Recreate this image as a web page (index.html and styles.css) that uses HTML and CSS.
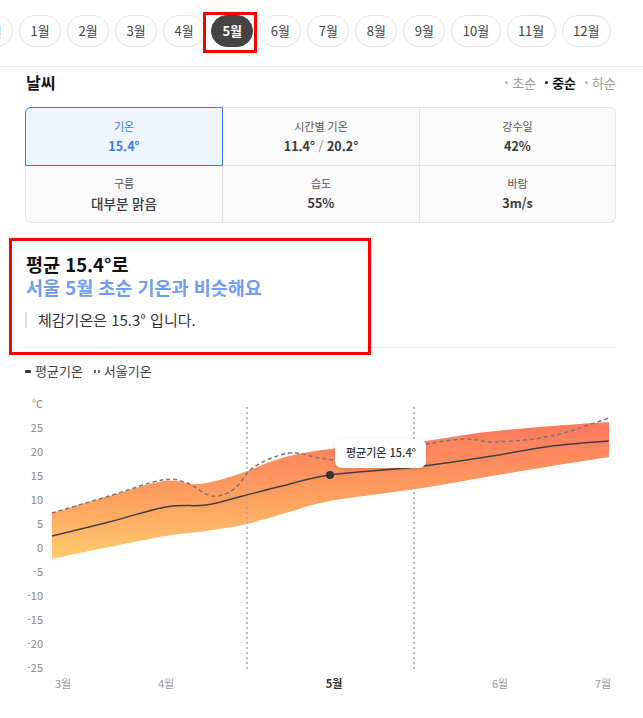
FILE: index.html
```html
<!DOCTYPE html>
<html lang="ko">
<head>
<meta charset="utf-8">
<title>날씨</title>
<link rel="stylesheet" href="styles.css">
</head>
<body>
<nav class="months">
  <div class="month-row">
    <span class="pill pill-edge">12월</span>
    <span class="pill">1월</span>
    <span class="pill">2월</span>
    <span class="pill">3월</span>
    <span class="pill">4월</span>
    <span class="pill pill-on">5월<span class="mark mark-pill"></span></span>
    <span class="pill">6월</span>
    <span class="pill">7월</span>
    <span class="pill">8월</span>
    <span class="pill">9월</span>
    <span class="pill">10월</span>
    <span class="pill">11월</span>
    <span class="pill">12월</span>
  </div>
</nav>
<main class="content">
  <div class="head">
    <h2 class="title">날씨</h2>
    <ul class="terms">
      <li class="term">초순</li>
      <li class="term term-on">중순</li>
      <li class="term">하순</li>
    </ul>
  </div>
  <div class="stats">
    <div class="cell cell-on"><span class="label">기온</span><span class="value">15.4°</span></div>
    <div class="cell"><span class="label">시간별 기온</span><span class="value">11.4° <span class="slash">/</span> 20.2°</span></div>
    <div class="cell"><span class="label">강수일</span><span class="value">42%</span></div>
    <div class="cell"><span class="label">구름</span><span class="value value-text">대부분 맑음</span></div>
    <div class="cell"><span class="label">습도</span><span class="value">55%</span></div>
    <div class="cell"><span class="label">바람</span><span class="value">3m/s</span></div>
  </div>
  <section class="summary">
    <span class="mark mark-summary"></span>
    <p class="headline">평균 15.4°로</p>
    <p class="headline headline-sub">서울 5월 초순 기온과 비슷해요</p>
    <p class="quote">체감기온은 15.3° 입니다.</p>
  </section>
  <div class="legend">
    <span class="key key-avg"></span><span class="key-text">평균기온</span>
    <span class="key key-seoul"><i></i><i></i></span><span class="key-text">서울기온</span>
  </div>
  <svg class="chart" width="591" height="305" viewBox="26 395 591 305">
    <defs>
      <linearGradient id="band" x1="0" y1="0" x2="0" y2="1">
        <stop offset="0" stop-color="#ff785e"/>
        <stop offset="0.55" stop-color="#fe9f5f"/>
        <stop offset="1" stop-color="#ffcb6e"/>
      </linearGradient>
      <filter id="shadow" x="-20%" y="-40%" width="140%" height="180%">
        <feDropShadow dx="0" dy="1" stdDeviation="2" flood-color="#000" flood-opacity="0.14"/>
      </filter>
    </defs>
    <g class="axis-y">
      <text x="44" y="409">°C</text>
      <text x="44" y="433">25</text>
      <text x="44" y="457">20</text>
      <text x="44" y="481">15</text>
      <text x="44" y="505">10</text>
      <text x="44" y="529">5</text>
      <text x="44" y="553">0</text>
      <text x="44" y="577">-5</text>
      <text x="44" y="601">-10</text>
      <text x="44" y="625">-15</text>
      <text x="44" y="649">-20</text>
      <text x="44" y="673">-25</text>
    </g>
    <path class="band" d="M53,514 C62.5,511.2 91.3,502.3 110,497 S150,484 165,482 S187.5,486.2 200,485 S226.2,479.3 240,475 S267.8,463.2 283,459 S308.7,452.7 331,450 S391,445.8 417,443 S464.3,435.7 487,433 S532.5,428.7 553,427 S600.5,423.7 610,423 L610,458 C600.5,459.5 573.5,463.7 553,467 S509.7,474.2 487,478 S443,486 417,490 S352.2,498.2 331,502 S303.8,509.2 290,513 S261.8,521.8 248,525 S220.5,530 207,532 S183.2,534.3 167,537 S129,544.2 110,548 S62.5,558 53,560 Z"/>
    <line class="guide" x1="248" y1="408" x2="248" y2="671"/>
    <line class="guide" x1="415" y1="408" x2="415" y2="671"/>
    <path class="seoul" d="M53,514 C62.5,511.2 91.7,502.5 110,497 S150,483.2 163,481 S179.7,481.3 188,484 S205.2,496 213,497 S228,494.8 235,490 S245.8,474 255,468 S279.2,455.5 290,454 S310.8,457.8 320,459 S334.2,461.8 345,461 S371.3,456.7 385,454 S413.3,447.3 427,445 S455.3,440.3 467,440 S482.7,443.5 497,443 S534.2,441 553,437 S600.5,422 610,419"/>
    <path class="avg" d="M53,537 C62.5,534.7 91,527.8 110,523 S150.8,510.8 167,508 S194.8,507.7 207,506 S227.3,501.2 240,498 S267.8,490.7 283,487 S308.7,479.2 331,476 S391,471 417,468 S464.3,461.5 487,458 S532.5,449.7 553,447 S600.5,442.8 610,442"/>
    <circle class="dot" cx="331" cy="476" r="4"/>
    <g class="tip">
      <rect x="336" y="440" width="91" height="29" rx="7" filter="url(#shadow)"/>
      <text x="347" y="458">평균기온 15.4°</text>
    </g>
    <g class="axis-x">
      <text x="64" y="689">3월</text>
      <text x="167" y="689">4월</text>
      <text class="axis-on" x="335" y="689">5월</text>
      <text x="501" y="689">6월</text>
      <text x="604" y="689">7월</text>
    </g>
  </svg>
</main>
</body>
</html>
```

FILE: styles.css
```css
* { box-sizing: border-box; }
html, body { margin: 0; padding: 0; background: #fff; }
body {
  font-family: "Noto Sans CJK KR", "Noto Sans", sans-serif;
  color: #333;
  width: 643px;
  overflow: hidden;
}
p, h2, ul { margin: 0; padding: 0; }
ul { list-style: none; }

.months {
  padding: 15px 0 19px;
  border-bottom: 1px solid #ececec;
  overflow: hidden;
}
.month-row {
  display: flex;
  gap: 6px;
  white-space: nowrap;
}
.pill {
  position: relative;
  flex: none;
  height: 32px;
  padding: 0 10.4px;
  border: 1px solid #e2e2e2;
  border-radius: 16px;
  font-size: 13px;
  line-height: 30px;
  color: #444;
  text-align: center;
}
.pill-edge { margin-left: -36px; }
.pill-on {
  background: #444;
  border-color: #444;
  color: #fff;
  font-weight: 700;
}
.mark {
  position: absolute;
  border: 3px solid #ff0000;
  pointer-events: none;
}
.mark-pill {
  left: -9px;
  top: -4px;
  width: 54px;
  height: 41px;
}

.content { padding: 0 27px 0 25px; }

.head {
  display: flex;
  align-items: center;
  justify-content: space-between;
  height: 26px;
  padding-top: 5px;
  margin-bottom: 14px;
}
.title {
  font-size: 16px;
  line-height: 21px;
  font-weight: 700;
  color: #111;
  padding-left: 1px;
}
.terms { display: flex; gap: 9px; }
.term {
  display: flex;
  align-items: center;
  gap: 4px;
  font-size: 13px;
  line-height: 18px;
  color: #9a9a9a;
}
.term::before {
  content: "";
  width: 3px;
  height: 3px;
  border-radius: 50%;
  background: #b0b0b0;
}
.term-on { color: #111; font-weight: 700; }
.term-on::before { background: #111; }

.stats {
  display: grid;
  grid-template-columns: 198px 197px 196px;
}
.cell {
  display: flex;
  flex-direction: column;
  align-items: center;
  justify-content: center;
  gap: 2px;
  height: 57px;
  background: #fafafa;
  border-right: 1px solid #e4e4e4;
  border-bottom: 1px solid #e4e4e4;
}
.cell:nth-child(-n+3) { height: 59px; border-top: 1px solid #e4e4e4; }
.cell:nth-child(3n+1) { border-left: 1px solid #e4e4e4; }
.cell:nth-child(1) { border-top-left-radius: 6px; }
.cell:nth-child(3) { border-top-right-radius: 6px; }
.cell:nth-child(4) { border-bottom-left-radius: 6px; }
.cell:nth-child(6) { border-bottom-right-radius: 6px; }
.cell-on {
  background: #eef5ff;
  border-color: #3b7df5;
}
.cell:nth-child(-n+3).cell-on { border-color: #3b7df5; }
.label {
  font-size: 11px;
  line-height: 16px;
  color: #555;
}
.value {
  font-size: 12.5px;
  line-height: 20px;
  font-weight: 700;
  color: #3a3a3a;
}
.slash { font-weight: 400; color: #888; }
.value-text { font-size: 13.5px; font-weight: 500; }
.cell-on .label, .cell-on .value { color: #3b7af2; }

.summary {
  position: relative;
  margin-top: 30px;
  padding-bottom: 19px;
  border-bottom: 1px solid #ececec;
}
.mark-summary {
  left: -16px;
  top: -15px;
  width: 362px;
  height: 117px;
}
.headline {
  font-size: 18.5px;
  line-height: 23px;
  font-weight: 700;
  color: #111;
  padding-left: 1px;
}
.headline-sub { color: #6f9cf4; }
.quote {
  margin-top: 13px;
  padding-left: 11px;
  border-left: 2px solid #dedede;
  font-size: 15px;
  line-height: 16px;
  color: #333;
}

.legend {
  display: flex;
  align-items: center;
  margin-top: 14px;
  height: 18px;
  font-size: 13px;
  line-height: 18px;
  color: #444;
}
.key { flex: none; display: flex; gap: 1px; }
.key-avg { width: 6px; height: 3px; background: #333; border-radius: 1px; margin-right: 4px; }
.key-seoul { margin-left: 11px; margin-right: 4px; }
.key-seoul i { display: block; width: 2px; height: 3px; background: #666; }
.key-seoul i + i { margin-left: 1px; }

.chart { display: block; margin-top: 14px; overflow: hidden; }
.chart text { font-family: "Noto Sans CJK KR", "Noto Sans", sans-serif; }
.axis-y text { font-size: 11px; fill: #888; text-anchor: end; }
.axis-x text { font-size: 11px; fill: #999; text-anchor: middle; }
.axis-x .axis-on { fill: #333; font-weight: 700; }
.band { fill: url(#band); }
.guide { stroke: #a8a8a8; stroke-width: 1.5; stroke-dasharray: 2 3; }
.seoul { fill: none; stroke: #777; stroke-width: 1.5; stroke-dasharray: 4 3; }
.avg { fill: none; stroke: #404040; stroke-width: 1.5; }
.dot { fill: #333; }
.tip rect { fill: #fff; }
.tip text { font-size: 11px; fill: #333; font-weight: 500; }
```
